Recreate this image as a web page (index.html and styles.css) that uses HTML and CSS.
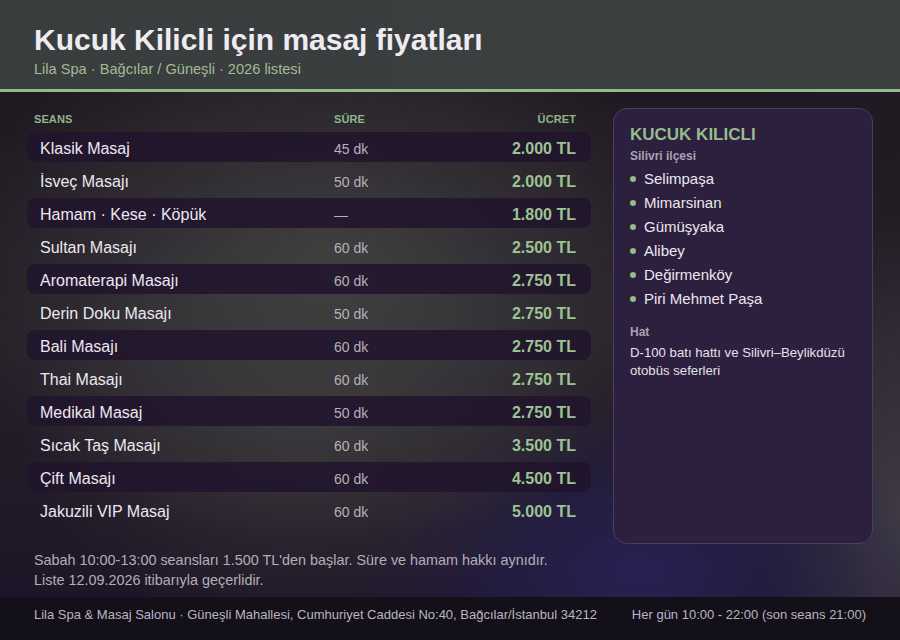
FILE: index.html
```html
<!DOCTYPE html>
<html lang="tr">
<head>
<meta charset="utf-8">
<title>Kucuk Kilicli için masaj fiyatları</title>
<link rel="stylesheet" href="styles.css">
</head>
<body>
<div class="page">
  <header class="top">
    <h1 class="title">Kucuk Kilicli için masaj fiyatları</h1>
    <div class="sub">Lila Spa · Bağcılar / Güneşli · 2026 listesi</div>
  </header>
  <main class="main">
    <section class="table">
      <div class="thead">
        <span>SEANS</span><span>SÜRE</span><span class="r">ÜCRET</span>
      </div>
      <div class="rows">
        <div class="row alt"><span class="name">Klasik Masaj</span><span class="dur">45 dk</span><span class="price">2.000 TL</span></div>
        <div class="row"><span class="name">İsveç Masajı</span><span class="dur">50 dk</span><span class="price">2.000 TL</span></div>
        <div class="row alt"><span class="name">Hamam · Kese · Köpük</span><span class="dur">—</span><span class="price">1.800 TL</span></div>
        <div class="row"><span class="name">Sultan Masajı</span><span class="dur">60 dk</span><span class="price">2.500 TL</span></div>
        <div class="row alt"><span class="name">Aromaterapi Masajı</span><span class="dur">60 dk</span><span class="price">2.750 TL</span></div>
        <div class="row"><span class="name">Derin Doku Masajı</span><span class="dur">50 dk</span><span class="price">2.750 TL</span></div>
        <div class="row alt"><span class="name">Bali Masajı</span><span class="dur">60 dk</span><span class="price">2.750 TL</span></div>
        <div class="row"><span class="name">Thai Masajı</span><span class="dur">60 dk</span><span class="price">2.750 TL</span></div>
        <div class="row alt"><span class="name">Medikal Masaj</span><span class="dur">50 dk</span><span class="price">2.750 TL</span></div>
        <div class="row"><span class="name">Sıcak Taş Masajı</span><span class="dur">60 dk</span><span class="price">3.500 TL</span></div>
        <div class="row alt"><span class="name">Çift Masajı</span><span class="dur">60 dk</span><span class="price">4.500 TL</span></div>
        <div class="row"><span class="name">Jakuzili VIP Masaj</span><span class="dur">60 dk</span><span class="price">5.000 TL</span></div>
      </div>
    </section>
    <aside class="card">
      <h2 class="card-title">KUCUK KILICLI</h2>
      <div class="label">Silivri ilçesi</div>
      <ul class="list">
        <li>Selimpaşa</li>
        <li>Mimarsinan</li>
        <li>Gümüşyaka</li>
        <li>Alibey</li>
        <li>Değirmenköy</li>
        <li>Piri Mehmet Paşa</li>
      </ul>
      <div class="label hat">Hat</div>
      <p class="body">D-100 batı hattı ve Silivri–Beylikdüzü otobüs seferleri</p>
    </aside>
    <div class="notes">
      <div>Sabah 10:00-13:00 seansları 1.500 TL'den başlar. Süre ve hamam hakkı aynıdır.</div>
      <div>Liste 12.09.2026 itibarıyla geçerlidir.</div>
    </div>
  </main>
  <footer class="foot">
    <span>Lila Spa &amp; Masaj Salonu · Güneşli Mahallesi, Cumhuriyet Caddesi No:40, Bağcılar/İstanbul 34212</span>
    <span>Her gün 10:00 - 22:00 (son seans 21:00)</span>
  </footer>
</div>
</body>
</html>
```

FILE: styles.css
```css
* { box-sizing: border-box; }
html, body { margin: 0; padding: 0; }
body {
  width: 900px;
  height: 640px;
  overflow: hidden;
  font-family: "Liberation Sans", Arial, sans-serif;
  color: #ece8f0;
  background: #1b1520;
}
.page {
  height: 640px;
  display: flex;
  flex-direction: column;
}
.top {
  height: 92px;
  padding: 24px 34px 0;
  background: linear-gradient(90deg, #393d3d, #3b3f3f 60%, #3c403f);
  border-bottom: 3px solid #97b78f;
}
.title {
  margin: 0;
  font-size: 30px;
  line-height: 32px;
  font-weight: bold;
  color: #efebf3;
}
.sub {
  margin-top: 4px;
  font-size: 14.6px;
  line-height: 18px;
  color: #a3bb97;
}
.main {
  flex: 1;
  display: grid;
  grid-template-columns: 564px 260px;
  grid-template-rows: auto 1fr;
  column-gap: 22px;
  padding: 16px 27px 0 27px;
  background:
    radial-gradient(ellipse 380px 270px at 330px 180px, rgba(66,66,66,0.95), rgba(60,60,60,0) 100%),
    radial-gradient(ellipse 280px 210px at 300px 330px, rgba(58,56,58,0.8), rgba(58,56,58,0) 100%),
    radial-gradient(ellipse 280px 170px at 640px 480px, rgba(40,34,86,0.95), rgba(40,34,84,0) 100%),
    radial-gradient(ellipse 140px 300px at 900px 420px, rgba(66,62,72,0.9), rgba(66,62,72,0) 100%),
    linear-gradient(180deg, #1f1922 0%, #252028 50%, #1e1628 100%);
}
.table {
  padding-bottom: 19px;
}
.thead {
  display: grid;
  grid-template-columns: 300px 1fr auto;
  padding: 4px 15px 0 7px;
  height: 24px;
  font-size: 11px;
  line-height: 14px;
  font-weight: bold;
  color: #8fb589;
  letter-spacing: 0.1px;
}
.thead .r { text-align: right; }
.rows {
  display: flex;
  flex-direction: column;
  gap: 3px;
}
.row {
  display: grid;
  grid-template-columns: 294px 1fr auto;
  align-items: center;
  height: 30px;
  padding: 4px 15px 0 13px;
  border-radius: 8px;
}
.row.alt {
  background: rgba(33, 21, 44, 0.88);
}
.name {
  font-size: 16px;
  color: #ece8f0;
}
.dur {
  font-size: 14px;
  color: #b5b1ba;
}
.price {
  font-size: 16px;
  font-weight: bold;
  color: #9dc393;
  text-align: right;
}
.card {
  background: #2d1f3e;
  border: 1px solid #4b3d60;
  border-radius: 14px;
  padding: 16px 16px 0;
}
.card-title {
  margin: 0;
  font-size: 17px;
  line-height: 20px;
  font-weight: bold;
  color: #95bd8b;
}
.label {
  margin-top: 3px;
  font-size: 12px;
  line-height: 16px;
  font-weight: bold;
  color: #aaa1b3;
}
.list {
  list-style: none;
  margin: 3px 0 0;
  padding: 0;
}
.list li {
  display: flex;
  align-items: center;
  gap: 8px;
  font-size: 15px;
  line-height: 24px;
  color: #ece8f0;
}
.list li::before {
  content: "";
  width: 6px;
  height: 6px;
  border-radius: 50%;
  background: #95bd8b;
}
.label.hat {
  margin-top: 13px;
}
.body {
  margin: 4px 0 0;
  font-size: 13.2px;
  line-height: 18px;
  color: #e6e2ea;
}
.notes {
  grid-column: 1 / -1;
  padding: 6px 0 0 7px;
  font-size: 14.4px;
  line-height: 20px;
  color: #b3aeb8;
}
.foot {
  height: 43px;
  display: flex;
  justify-content: space-between;
  padding: 11px 34px 0;
  background: #141019;
  font-size: 13px;
  line-height: 14px;
  color: #bab5c2;
}
```
